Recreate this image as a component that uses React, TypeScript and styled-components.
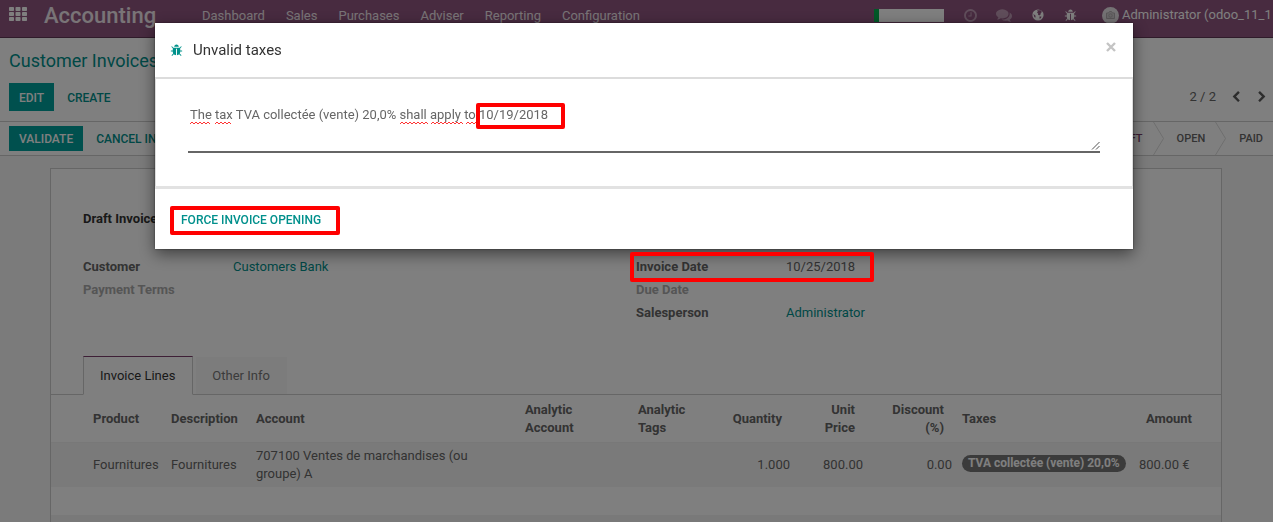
import React from "react";
import styled, { createGlobalStyle } from "styled-components";

const teal = "#00928b";
const darkTeal = "#00908c";

const GlobalStyle = createGlobalStyle`
  *, *::before, *::after { box-sizing: border-box; }
  html, body { margin: 0; }
  body {
    overflow: hidden;
    font-family: Roboto, "Liberation Sans", sans-serif;
    font-size: 13px;
    line-height: 18px;
    color: #666;
    background: #f6f6f6;
  }
  button, textarea { font: inherit; color: inherit; }
  a { color: inherit; text-decoration: none; }
`;

const Page = styled.div`
  height: 100vh;
  overflow: hidden;
  display: flex;
  flex-direction: column;
`;

const Navbar = styled.header`
  flex: none;
  display: flex;
  align-items: flex-start;
  height: 38px;
  padding-left: 9px;
  background: #905680;
  border-bottom: 1px solid #5f3654;
  color: #fff;
`;

const PlainButton = styled.button`
  display: inline-flex;
  align-items: center;
  justify-content: center;
  padding: 0;
  border: 0;
  background: none;
  cursor: pointer;
`;

const AppsButton = styled(PlainButton)`
  width: 18px;
  height: 14px;
  margin-top: 7px;
`;

const Brand = styled.a`
  margin-left: 17px;
  width: 114px;
  font-size: 22px;
  font-weight: 500;
  line-height: 32px;
  color: #f2e9ef;
  white-space: nowrap;
`;

const Menu = styled.nav`
  display: flex;
  gap: 21px;
  margin-left: 44px;
  line-height: 32px;
  color: #f2e9ef;
  white-space: nowrap;
`;

const Systray = styled.div`
  display: flex;
  align-items: center;
  height: 30px;
  margin-left: auto;
`;

const Planner = styled.div`
  width: 70px;
  height: 13px;
  margin-right: 18px;
  background: #fff;
`;

const PlannerFill = styled.div`
  width: 5px;
  height: 100%;
  background: #00b050;
`;

const TrayButton = styled(PlainButton)<{ $faded?: boolean; $width: number }>`
  width: ${(p) => p.$width}px;
  height: 30px;
  color: ${(p) => (p.$faded ? "#c09cb6" : "#fff")};
`;

const UserMenu = styled(PlainButton)`
  flex: 0 0 178px;
  height: 30px;
  padding-left: 7px;
  justify-content: flex-start;
  gap: 3px;
  overflow: hidden;
  white-space: nowrap;
`;

const ControlPanel = styled.section`
  flex: none;
  display: grid;
  grid-template-columns: 1fr auto;
  grid-template-rows: 45px 28px;
  height: 84px;
  padding: 0 5px 0 9px;
  background: #fff;
  border-bottom: 1px solid #ccc;
`;

const Breadcrumb = styled.h1`
  grid-column: 1 / -1;
  margin: 0;
  font-size: 18px;
  font-weight: 400;
  line-height: 45px;
  color: ${darkTeal};
`;

const Actions = styled.div`
  display: flex;
  align-items: center;
`;

const ActionButton = styled.button<{ $primary?: boolean; $short?: boolean }>`
  height: ${(p) => (p.$short ? 25 : 28)}px;
  padding: 1px ${(p) => (p.$primary ? 10 : 13)}px 0;
  border: 0;
  background: ${(p) => (p.$primary ? "#00a09d" : "transparent")};
  color: ${(p) => (p.$primary ? "#fff" : darkTeal)};
  font-size: 12px;
  font-weight: 500;
  text-transform: uppercase;
  white-space: nowrap;
  cursor: pointer;
`;

const Pager = styled.div`
  display: flex;
  align-items: center;
  gap: 14px;
`;

const PagerButton = styled(PlainButton)`
  width: 12px;
  color: #5a5a5a;
`;

const StatusBar = styled.section`
  flex: none;
  display: flex;
  justify-content: space-between;
  height: 34px;
  padding-left: 9px;
  background: #fff;
  border-bottom: 1px solid #ccc;
`;

const Stages = styled.div`
  display: flex;
  align-items: center;
  padding-right: 10px;
  font-size: 11px;
  font-weight: 500;
`;

const Stage = styled.span<{ $active?: boolean }>`
  color: ${(p) => (p.$active ? "#7c3f6d" : "#666")};
`;

const StageArrow = styled.svg`
  width: 12px;
  height: 33px;
  margin: 0 12px 0 10px;
`;

const Sheet = styled.main`
  flex: 1 0 auto;
  margin: 12px 51px 0 50px;
  padding-top: 41px;
  background: #fff;
  border: 1px solid #ccc;
  border-bottom: 0;
`;

const SheetTitle = styled.h2`
  margin: 0 32px 30px;
  font-size: 13px;
  font-weight: 700;
  line-height: 18px;
  color: #333;
`;

const Groups = styled.div`
  display: grid;
  grid-template-columns: 1fr 1fr;
  padding: 0 32px;
`;

const Fields = styled.dl`
  margin: 0;
`;

const Field = styled.div<{ $empty?: boolean }>`
  position: relative;
  display: flex;
  height: 23px;
  line-height: 18px;
  color: ${(p) => (p.$empty ? "#aaa" : "#666")};
`;

const FieldLabel = styled.dt`
  width: 150px;
  font-weight: 700;
`;

const FieldValue = styled.dd`
  margin: 0;
`;

const RecordLink = styled.a`
  color: ${darkTeal};
`;

const Tabs = styled.div`
  display: flex;
  gap: 2px;
  height: 39px;
  margin-top: 29px;
  padding-left: 32px;
  border-bottom: 1px solid #ccc;
`;

const Tab = styled.button<{ $active?: boolean }>`
  height: 39px;
  padding: 0 17px 0 16px;
  border: 1px solid ${(p) => (p.$active ? "#ccc" : "transparent")};
  border-top-color: ${(p) => (p.$active ? "#7c3f6d" : "transparent")};
  border-bottom-color: ${(p) => (p.$active ? "#fff" : "transparent")};
  background: ${(p) => (p.$active ? "#fff" : "#f9f9f9")};
  background-clip: padding-box;
  color: ${(p) => (p.$active ? "#333" : "#777")};
  cursor: pointer;
`;

const Lines = styled.table`
  width: 100%;
  table-layout: fixed;
  border-collapse: collapse;
`;

const Column = styled.col<{ $width?: number }>`
  width: ${(p) => (p.$width ? `${p.$width}px` : "auto")};
`;

const HeadCell = styled.th<{ $right?: boolean }>`
  height: 47px;
  padding: 6px 13px 4px 5px;
  border-bottom: 1px solid #f0f0f0;
  text-align: ${(p) => (p.$right ? "right" : "left")};
  color: #666;
  &:first-child { padding-right: 0; padding-left: 42px; }
  &:nth-child(2) { padding-right: 5px; }
  &:last-child { padding-right: 29px; }
`;

const Cell = styled.td<{ $right?: boolean }>`
  height: 45px;
  padding: 4px 5px;
  background: #f5f5f5;
  text-align: ${(p) => (p.$right ? "right" : "left")};
  white-space: ${(p) => (p.$right ? "nowrap" : "normal")};
  &:first-child { padding-left: 42px; }
  &:last-child { padding-right: 32px; }
`;

const BodyRow = styled.tr`
  box-shadow: inset 0 4px 4px -2px #e8e8e8;
`;

const SpacerCell = styled.td`
  height: 28px;
  padding: 0;
`;

const FootCell = styled.td`
  height: 30px;
  padding: 0;
  background: #f3f3f3;
`;

const Tag = styled.span`
  display: inline-block;
  height: 17px;
  padding: 0 6px;
  border-radius: 9px;
  background: #777;
  color: #fff;
  font-size: 12px;
  font-weight: 700;
  line-height: 17px;
  white-space: nowrap;
  vertical-align: text-bottom;
`;

const Backdrop = styled.div`
  position: fixed;
  inset: 0;
  z-index: 10;
  padding: 23px 140px 0 155px;
  background: rgba(0, 0, 0, 0.5);
`;

const Dialog = styled.section`
  background: #fff;
  box-shadow: 0 5px 15px rgba(0, 0, 0, 0.5), 0 0 2px rgba(0, 0, 0, 0.5);
`;

const DialogHeader = styled.header`
  display: flex;
  align-items: center;
  height: 56px;
  padding: 0 15px;
  border-bottom: 2px solid #dcdcdc;
`;

const DialogTitle = styled.h3`
  flex: 1;
  margin: 0 0 0 10px;
  font-size: 15px;
  font-weight: 400;
  color: #333;
`;

const CloseButton = styled(PlainButton)`
  width: 14px;
  height: 14px;
  margin-bottom: 6px;
  color: #c4c4c4;
`;

const DialogBody = styled.div`
  padding: 20px 32px 33px;
  border: solid #dcdcdc;
  border-width: 0 1px;
`;

const NoteField = styled.div`
  position: relative;
  display: flex;
`;

const Note = styled.textarea`
  width: 100%;
  height: 54px;
  padding: 7px 2px;
  border: 0;
  border-bottom: 2px solid #666;
  outline: 0;
  resize: none;
  overflow: hidden;
  background: transparent;
  line-height: 18px;
  color: #666;
`;

const SpellMarks = styled.svg`
  position: absolute;
  top: 22px;
  left: 0;
  width: 300px;
  height: 4px;
  pointer-events: none;
`;

const ResizeGrip = styled.svg`
  position: absolute;
  right: 0;
  bottom: 3px;
  width: 9px;
  height: 9px;
  pointer-events: none;
`;

const DialogFooter = styled.footer`
  position: relative;
  display: flex;
  align-items: center;
  height: 63px;
  padding: 1px 13px 0;
  border-top: 3px solid #e2e2e2;
`;

const Highlight = styled.div<{ $x: number; $y: number; $w: number; $h: number }>`
  position: absolute;
  z-index: 20;
  left: ${(p) => p.$x}px;
  top: ${(p) => p.$y}px;
  width: ${(p) => p.$w}px;
  height: ${(p) => p.$h}px;
  border: 4px solid #f00;
  border-radius: 2px;
  pointer-events: none;
`;

const glyphs = {
  bug: "M1696 960q0 26-19 45t-45 19h-224q0 171-67 290l208 209q19 19 19 45t-19 45q-18 19-45 19t-45-19l-198-197q-5 5-15 13t-42 28.5-65 36.5-82 29-97 13v-896h-128v896q-51 0-101.5-13.5t-87-33-66-39-43.5-32.5l-15-14-183 207q-20 21-48 21-24 0-43-16-19-18-20.5-44.5t15.5-46.5l202-227q-58-114-58-274h-224q-26 0-45-19t-19-45 19-45 45-19h224v-294l-173-173q-19-19-19-45t19-45 45-19 45 19l173 173h844l173-173q19-19 45-19t45 19 19 45-19 45l-173 173v294h224q26 0 45 19t19 45zm-480-576h-640q0-133 93.5-226.5t226.5-93.5 226.5 93.5 93.5 226.5z",
  clock: "M1024 544v448q0 14-9 23t-23 9h-320q-14 0-23-9t-9-23v-64q0-14 9-23t23-9h224v-352q0-14 9-23t23-9h64q14 0 23 9t9 23zm416 352q0-148-73-273t-198-198-273-73-273 73-198 198-73 273 73 273 198 198 273 73 273-73 198-198 73-273zm224 0q0 209-103 385.5t-279.5 279.5-385.5 103-385.5-103-279.5-279.5-103-385.5 103-385.5 279.5-279.5 385.5-103 385.5 103 279.5 279.5 103 385.5z",
  comments: "M1408 768q0 139-94 257t-256.5 186.5-353.5 68.5q-86 0-176-16-124 88-278 128-36 9-86 16h-3q-11 0-20.5-8t-11.5-21q-1-3-1-6.5t.5-6.5 2-6l2.5-5 3.5-5.5 4-5 4.5-5 4-4.5q5-6 23-25t26-29.5 22.5-29 25-38.5 20.5-44q-124-72-195-177t-71-224q0-139 94-257t256.5-186.5 353.5-68.5 353.5 68.5 256.5 186.5 94 257zm384 256q0 120-71 224.5t-195 176.5q10 24 20.5 44t25 38.5 22.5 29 26 29.5 23 25q1 1 4 4.5t4.5 5 4 5 3.5 5.5l2.5 5 2 6 .5 6.5-1 6.5q-3 14-13 22t-22 7q-50-7-86-16-154-40-278-128-90 16-176 16-271 0-472-132 58 4 88 4 161 0 309-45t264-129q125-92 192-212t67-254q0-77-23-152 129 71 204 178t75 230z",
  left: "M1427 301l-531 531 531 531q19 19 19 45t-19 45l-166 166q-19 19-45 19t-45-19l-742-742q-19-19-19-45t19-45l742-742q19-19 45-19t45 19l166 166q19 19 19 45t-19 45z",
  right: "M1363 877l-742 742q-19 19-45 19t-45-19l-166-166q-19-19-19-45t19-45l531-531-531-531q-19-19-19-45t19-45l166-166q19-19 45-19t45 19l742 742q19 19 19 45t-19 45z",
};

function Glyph({ name, size }: { name: keyof typeof glyphs; size: number }) {
  return (
    <svg width={size} height={size} viewBox="0 0 1792 1792" fill="currentColor" aria-hidden="true">
      <path d={glyphs[name]} />
    </svg>
  );
}

function AppsIcon() {
  const cells = [0, 1, 2].flatMap((r) => [0, 1, 2].map((c) => [c * 6.5, r * 5]));
  return (
    <svg width="18" height="14" viewBox="0 0 18 14" fill="#fff" aria-hidden="true">
      {cells.map(([x, y]) => (
        <rect key={`${x}-${y}`} x={x} y={y} width="5" height="4" rx="0.8" />
      ))}
    </svg>
  );
}

function GlobeIcon() {
  return (
    <svg width="12" height="12" viewBox="0 0 12 12" aria-hidden="true">
      <circle cx="6" cy="6" r="5.600" fill="#fff" />
      <path
        d="M5 1.200 8.600 1.300 10 3 8.800 4 8.600 5.400 7.200 6.400 6 5.800 6.200 4.600 5 3.800 5.800 2.600zM7.400 7.400 9.400 7.600 9 9 7.600 9.800zM1.400 5 3.400 6.600 3.600 8.600 2.400 8.200z"
        fill="#905680"
      />
    </svg>
  );
}

function AvatarIcon() {
  return (
    <svg width="17" height="17" viewBox="0 0 17 17" aria-hidden="true">
      <circle cx="8.500" cy="8.500" r="8.500" fill="#e9e4e8" />
      <path d="M4.500 6h2l1-1.500h2L10.500 6h2v5.500h-8z" fill="#d4d0d3" stroke="#b4aeb2" />
      <circle cx="8.500" cy="8.500" r="1.700" fill="none" stroke="#b4aeb2" />
    </svg>
  );
}

function Chevron() {
  return (
    <StageArrow viewBox="0 0 12 33" fill="none" aria-hidden="true">
      <path d="M0.500 0 L10.500 16.500 L0.500 33" stroke="#dcdcdc" />
    </StageArrow>
  );
}

const wave = (from: number, to: number) => {
  let d = `M${from} 3`;
  for (let x = from, up = true; x < to; x += 2, up = !up) d += `l2 ${up ? -2 : 2}`;
  return d;
};

const misspelled = [[2, 22], [27, 43], [212, 239], [243, 274], [278, 289]];

export default function App() {
  return (
    <>
      <GlobalStyle />
      <Page>
        <Navbar>
          <AppsButton aria-label="Applications"><AppsIcon /></AppsButton>
          <Brand href="#">Accounting</Brand>
          <Menu>
            {["Dashboard", "Sales", "Purchases", "Adviser", "Reporting", "Configuration"].map((m) => (
              <a href="#" key={m}>{m}</a>
            ))}
          </Menu>
          <Systray>
            <Planner><PlannerFill /></Planner>
            <TrayButton $width={16} $faded aria-label="Activities"><Glyph name="clock" size={15} /></TrayButton>
            <TrayButton $width={52} $faded aria-label="Conversations"><Glyph name="comments" size={16} /></TrayButton>
            <TrayButton $width={15} aria-label="Website"><GlobeIcon /></TrayButton>
            <TrayButton $width={50} aria-label="Debug"><Glyph name="bug" size={13} /></TrayButton>
            <UserMenu><AvatarIcon />Administrator (odoo_11_1</UserMenu>
          </Systray>
        </Navbar>

        <ControlPanel>
          <Breadcrumb>Customer Invoices</Breadcrumb>
          <Actions>
            <ActionButton $primary>Edit</ActionButton>
            <ActionButton>Create</ActionButton>
          </Actions>
          <Pager>
            <span>2 / 2</span>
            <PagerButton aria-label="Previous"><Glyph name="left" size={12} /></PagerButton>
            <PagerButton aria-label="Next"><Glyph name="right" size={12} /></PagerButton>
          </Pager>
        </ControlPanel>

        <StatusBar>
          <Actions>
            <ActionButton $primary $short>Validate</ActionButton>
            <ActionButton $short>Cancel In</ActionButton>
          </Actions>
          <Stages>
            <Stage $active>DRAFT</Stage>
            <Chevron />
            <Stage>OPEN</Stage>
            <Chevron />
            <Stage>PAID</Stage>
          </Stages>
        </StatusBar>

        <Sheet>
          <SheetTitle>Draft Invoice</SheetTitle>
          <Groups>
            <Fields>
              <Field>
                <FieldLabel>Customer</FieldLabel>
                <FieldValue><RecordLink href="#">Customers Bank</RecordLink></FieldValue>
              </Field>
              <Field $empty><FieldLabel>Payment Terms</FieldLabel></Field>
            </Fields>
            <Fields>
              <Field>
                <FieldLabel>Invoice Date</FieldLabel>
                <FieldValue>10/25/2018</FieldValue>
                <Highlight $x={-6} $y={-6} $w={244} $h={30} />
              </Field>
              <Field $empty><FieldLabel>Due Date</FieldLabel></Field>
              <Field>
                <FieldLabel>Salesperson</FieldLabel>
                <FieldValue><RecordLink href="#">Administrator</RecordLink></FieldValue>
              </Field>
            </Fields>
          </Groups>

          <Tabs>
            <Tab $active>Invoice Lines</Tab>
            <Tab>Other Info</Tab>
          </Tabs>

          <Lines>
            <colgroup>
              {[115, 85, undefined, 113, 89, 73, 73, 89, 177, 87].map((w, i) => (
                <Column key={i} $width={w} />
              ))}
            </colgroup>
            <thead>
              <tr>
                <HeadCell>Product</HeadCell>
                <HeadCell>Description</HeadCell>
                <HeadCell>Account</HeadCell>
                <HeadCell>Analytic Account</HeadCell>
                <HeadCell>Analytic Tags</HeadCell>
                <HeadCell $right>Quantity</HeadCell>
                <HeadCell $right>Unit Price</HeadCell>
                <HeadCell $right>Discount (%)</HeadCell>
                <HeadCell>Taxes</HeadCell>
                <HeadCell $right>Amount</HeadCell>
              </tr>
            </thead>
            <tbody>
              <BodyRow>
                <Cell>Fournitures</Cell>
                <Cell>Fournitures</Cell>
                <Cell>707100 Ventes de marchandises (ou groupe) A</Cell>
                <Cell />
                <Cell />
                <Cell $right>1.000</Cell>
                <Cell $right>800.00</Cell>
                <Cell $right>0.00</Cell>
                <Cell><Tag>TVA collectée (vente) 20,0%</Tag></Cell>
                <Cell $right>800.00 €</Cell>
              </BodyRow>
              <tr><SpacerCell colSpan={10} /></tr>
            </tbody>
            <tfoot>
              <tr><FootCell colSpan={10} /></tr>
            </tfoot>
          </Lines>
        </Sheet>
      </Page>

      <Backdrop>
        <Dialog role="dialog" aria-labelledby="dialog-title">
          <DialogHeader>
            <PlainButton aria-label="Debug">
              <svg width="13" height="13" viewBox="0 0 1792 1792" fill={teal} aria-hidden="true">
                <path d={glyphs.bug} />
              </svg>
            </PlainButton>
            <DialogTitle id="dialog-title">Unvalid taxes</DialogTitle>
            <CloseButton aria-label="Close">
              <svg width="10" height="10" viewBox="0 0 10 10" stroke="currentColor" strokeWidth="2.400" aria-hidden="true">
                <path d="M1 1l8 8M9 1L1 9" />
              </svg>
            </CloseButton>
          </DialogHeader>
          <DialogBody>
            <NoteField>
              <Note
                aria-label="Message"
                spellCheck={false}
                defaultValue="The tax TVA collectée (vente) 20,0% shall apply to 10/19/2018"
              />
              <SpellMarks viewBox="0 0 300 4" fill="none" stroke="#f33" aria-hidden="true">
                {misspelled.map(([a, b]) => <path key={a} d={wave(a, b)} />)}
              </SpellMarks>
              <ResizeGrip viewBox="0 0 9 9" stroke="#555" aria-hidden="true">
                <path d="M1 8.500L8.500 1M5 8.500L8.500 5" />
              </ResizeGrip>
              <Highlight $x={288} $y={4} $w={89} $h={26} />
            </NoteField>
          </DialogBody>
          <DialogFooter>
            <ActionButton>Force Invoice Opening</ActionButton>
            <Highlight $x={15} $y={17} $w={170} $h={29} />
          </DialogFooter>
        </Dialog>
      </Backdrop>
    </>
  );
}
